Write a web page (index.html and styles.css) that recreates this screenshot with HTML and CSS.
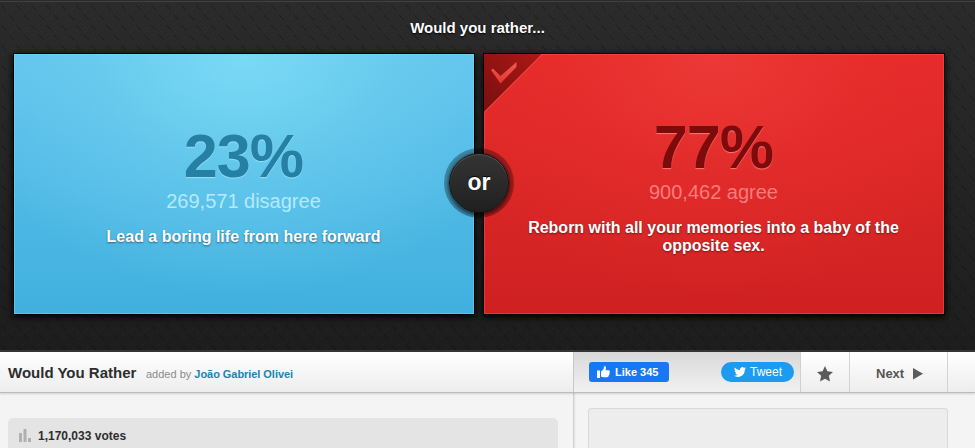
FILE: index.html
```html
<!DOCTYPE html>
<html lang="en">
<head>
<meta charset="utf-8">
<title>Would You Rather</title>
<link rel="stylesheet" href="styles.css">
</head>
<body>
<section class="stage">
  <svg class="texture" width="975" height="352" aria-hidden="true">
    <defs>
      <pattern id="weave" width="15" height="20" patternUnits="userSpaceOnUse">
        <path d="M1 3h1v1h1v1h1v1h1v1h1v1h-1v-1h-1v-1h-1v-1h-1v-1h-1zM9 13h1v1h1v1h1v1h1v1h1v1h-1v-1h-1v-1h-1v-1h-1v-1h-1z" fill="#000" fill-opacity=".3"/>
        <path d="M8 2h1v1h-1zM12 6h1v1h-1zM2 12h1v1h-1zM5 16h1v1h-1zM10 9h1v1h-1z" fill="#fff" fill-opacity=".035"/>
      </pattern>
    </defs>
    <rect width="975" height="352" fill="url(#weave)"/>
  </svg>
  <h1 class="question">Would you rather...</h1>
  <div class="choices">
    <div class="card blue">
      <div class="percent">23%</div>
      <div class="count">269,571 disagree</div>
      <div class="answer">Lead a boring life from here forward</div>
    </div>
    <div class="card red">
      <svg class="corner" width="60" height="60" viewBox="0 0 60 60" aria-hidden="true">
        <defs>
          <linearGradient id="fold" x1="0" y1="1" x2="1" y2="0"><stop offset="0" stop-color="#780f0e"/><stop offset="1" stop-color="#ad1815"/></linearGradient>
          <linearGradient id="tick" x1="0" y1="0" x2="0" y2="1"><stop offset="0" stop-color="#f05a57"/><stop offset="1" stop-color="#e53430"/></linearGradient>
        </defs>
        <path d="M0 0H58L0 58Z" fill="url(#fold)"/>
        <path d="M58.500 0L0 58.500" stroke="#f2504d" fill="none"/>
        <path d="M7 16L9 14.500L16.500 22L32.500 8V13L16.500 29.500Z" fill="url(#tick)"/>
      </svg>
      <div class="percent">77%</div>
      <div class="count">900,462 agree</div>
      <div class="answer">Reborn with all your memories into a baby of the opposite sex.</div>
    </div>
    <div class="or">or</div>
  </div>
</section>
<div class="toolbar">
  <div class="title"><h2>Would You Rather</h2><span class="by">added by <a>João Gabriel Olivei</a></span></div>
  <div class="social">
    <div class="like">
      <svg width="13" height="12" viewBox="0 0 13 12"><path fill="#fff" d="M0 4.500H3V12H0ZM4 5.500L6.500 3.200L7 .3C8.500-.1 9.200.8 9 2L8.500 4.200H11.800C13 4.300 13.100 5.500 12.400 6C13 6.700 12.800 7.500 12.200 7.900C12.500 8.600 12.200 9.300 11.600 9.600C11.700 10.600 11.200 11.300 10.200 11.300H6.500L4 10.700Z"/></svg>
      <span>Like 345</span>
    </div>
    <div class="tweet">
      <svg width="12" height="12" viewBox="0 0 24 24"><path fill="#fff" d="M23.950 4.570a10 10 0 0 1-2.820.77 4.960 4.960 0 0 0 2.160-2.720c-.95.550-2 .95-3.130 1.180a4.920 4.920 0 0 0-8.380 4.480C7.690 8.090 4.070 6.130 1.640 3.160a4.820 4.820 0 0 0-.67 2.480c0 1.710.87 3.210 2.190 4.100a4.900 4.900 0 0 1-2.230-.62v.06a4.920 4.920 0 0 0 3.950 4.830 5 5 0 0 1-2.210.080 4.940 4.940 0 0 0 4.600 3.420A9.870 9.870 0 0 1 0 19.540a13.990 13.990 0 0 0 7.550 2.210c9.050 0 14-7.500 14-13.980 0-.210 0-.42-.02-.63a9.940 9.940 0 0 0 2.420-2.570z"/></svg>
      <span>Tweet</span>
    </div>
  </div>
  <div class="star"><svg width="16" height="16" viewBox="0 0 16 16"><path fill="#5b5b5b" d="M8 0L10.400 5.200L16 5.900L11.900 9.700L13 15.500L8 12.700L3 15.500L4.100 9.700L0 5.900L5.600 5.200Z"/></svg></div>
  <div class="next"><span>Next</span><svg width="10" height="12" viewBox="0 0 10 12"><path fill="#5b5b5b" d="M0 0L10 5.800L0 11.500Z"/></svg></div>
  <div class="rest"></div>
</div>
<div class="content">
  <div class="main">
    <div class="votes">
      <svg width="12" height="13" viewBox="0 0 12 13"><path fill="#b0b0b0" d="M0 4H3V13H0ZM4.500 0H7.500V13H4.500ZM9 9H12V13H9Z"/></svg>
      <span>1,170,033 votes</span>
    </div>
  </div>
  <div class="side"><div class="panel"></div></div>
</div>
</body>
</html>
```
FILE: styles.css
```css
* { box-sizing: border-box; }
body {
  margin: 0;
  width: 975px;
  height: 448px;
  overflow: hidden;
  background: #f4f4f4;
  font-family: "Liberation Sans", Arial, sans-serif;
}
h1, h2 { margin: 0; }
svg { display: block; flex: none; }
.stage {
  position: relative;
  height: 352px;
  background: linear-gradient(#2b2b2b, #1d1d1d);
  border-bottom: 2px solid #343434;
}
.stage::before {
  content: "";
  position: absolute;
  top: 1px;
  left: 0;
  right: 0;
  height: 1px;
  background: #414141;
}
.texture { position: absolute; top: 2px; left: 0; height: 348px; }
.question {
  position: relative;
  padding: 19px 20px 0 0;
  height: 53px;
  font-size: 15px;
  line-height: 18px;
  text-align: center;
  color: #fff;
  text-shadow: 0 1px 2px #000;
}
.choices {
  position: relative;
  display: flex;
  gap: 8px;
  width: 932px;
  margin-left: 13px;
}
.card {
  position: relative;
  width: 462px;
  height: 262px;
  border: 1px solid #000;
  text-align: center;
}
.blue {
  padding-top: 70px;
  background: radial-gradient(ellipse 300px 240px at 50% 0, rgba(124, 219, 245, .95) 0%, rgba(113, 210, 240, .5) 50%, rgba(85, 190, 233, 0) 100%), linear-gradient(#60c3ec, #41b0df);
  box-shadow: inset 0 0 0 1px rgba(113, 222, 247, .45), 0 2px 7px #000;
}
.red {
  padding-top: 61px;
  background: radial-gradient(ellipse 300px 240px at 50% 0, #ec3936 0%, rgba(232, 48, 46, .5) 50%, rgba(220, 38, 38, 0) 100%), linear-gradient(#e52b2a, #cf2122);
  box-shadow: inset 0 0 0 1px rgba(255, 82, 80, .45), 0 2px 7px #000;
}
.corner { position: absolute; left: 0; top: 0; }
.percent {
  height: 64px;
  padding-right: 1px;
  font-size: 61px;
  line-height: 65px;
  letter-spacing: -.9px;
  font-weight: bold;
}
.count {
  height: 26px;
  font-size: 20px;
  line-height: 26px;
  padding-right: 1px;
}
.answer {
  width: 400px;
  margin: 14px auto 0;
  padding-right: 1px;
  font-size: 16px;
  line-height: 18px;
  font-weight: bold;
  color: #fff;
  text-shadow: 0 1px 2px rgba(0, 0, 0, .45);
}
.blue .percent { color: #267fa5; text-shadow: 0 1px 1px #96e0f7; }
.blue .count { color: #b5e9fb; }
.red .percent { color: #7d0b0c; text-shadow: 0 1px 1px #fa7775; }
.red .count { color: #fa7b7c; }
.or {
  position: absolute;
  left: 436px;
  top: 100px;
  width: 60px;
  height: 60px;
  border-radius: 50%;
  border: 1px solid #101010;
  background: linear-gradient(#343434, #202020);
  box-shadow: inset 0 1px 1px #555, 0 0 0 5px rgba(0, 0, 0, .3), 0 1px 3px 1px rgba(0, 0, 0, .55);
  color: #fff;
  font-size: 23px;
  line-height: 57px;
  font-weight: bold;
  text-align: center;
  text-shadow: 0 -1px 1px #000;
}
.toolbar {
  position: relative;
  display: flex;
  height: 41px;
  border-bottom: 1px solid #bcbcbc;
  box-shadow: 0 1px 2px rgba(0, 0, 0, .15);
  background: linear-gradient(#fff, #ededed);
}
.title {
  display: flex;
  align-items: baseline;
  width: 573px;
  padding: 12px 0 0 8px;
}
.title h2 {
  width: 138px;
  font-size: 15px;
  line-height: 18px;
  color: #2d2d2d;
  white-space: nowrap;
}
.by { font-size: 11px; color: #8b8b8b; white-space: nowrap; }
.by a { color: #1985b1; font-weight: bold; letter-spacing: -.05px; }
.social {
  display: flex;
  justify-content: space-between;
  width: 228px;
  padding: 10px 6px 0 15px;
  border-left: 1px solid #c8c8c8;
  border-right: 1px solid #d0d0d0;
  background: linear-gradient(#d9d9d9, #f1f1f1);
}
.like {
  display: flex;
  align-items: center;
  gap: 5px;
  width: 80px;
  height: 20px;
  padding-left: 8px;
  border-radius: 3px;
  background: #1877f2;
  color: #fff;
  font-size: 11px;
  font-weight: bold;
  white-space: nowrap;
}
.tweet {
  display: flex;
  align-items: center;
  gap: 4px;
  width: 73px;
  height: 20px;
  padding-left: 13px;
  border-radius: 10px;
  background: #1d9bf0;
  color: #fff;
  font-size: 12px;
}
.star {
  width: 49px;
  padding: 14px 0 0 16px;
  border-right: 1px solid #d3d3d3;
}
.next {
  display: flex;
  align-items: center;
  gap: 9px;
  width: 98px;
  padding: 3px 0 0 26px;
  border-right: 1px solid #d3d3d3;
  color: #555;
  font-size: 13px;
  font-weight: bold;
}
.rest { flex: 1; }
.content { display: flex; height: 55px; }
.main { width: 573px; padding: 25px 15px 0 8px; }
.votes {
  display: flex;
  align-items: center;
  gap: 7px;
  height: 36px;
  padding: 0 0 1px 11px;
  border-radius: 5px 5px 0 0;
  background: #e4e4e4;
  color: #2d2d2d;
  font-size: 12px;
  font-weight: bold;
}
.side {
  width: 402px;
  padding: 15px 27px 0 14px;
  border-left: 1px solid #cfcfcf;
  box-shadow: inset 2px 0 2px -1px rgba(0, 0, 0, .08);
}
.panel {
  height: 50px;
  border: 1px solid #d9d9d9;
  border-radius: 3px;
  background: #ededed;
}
```
